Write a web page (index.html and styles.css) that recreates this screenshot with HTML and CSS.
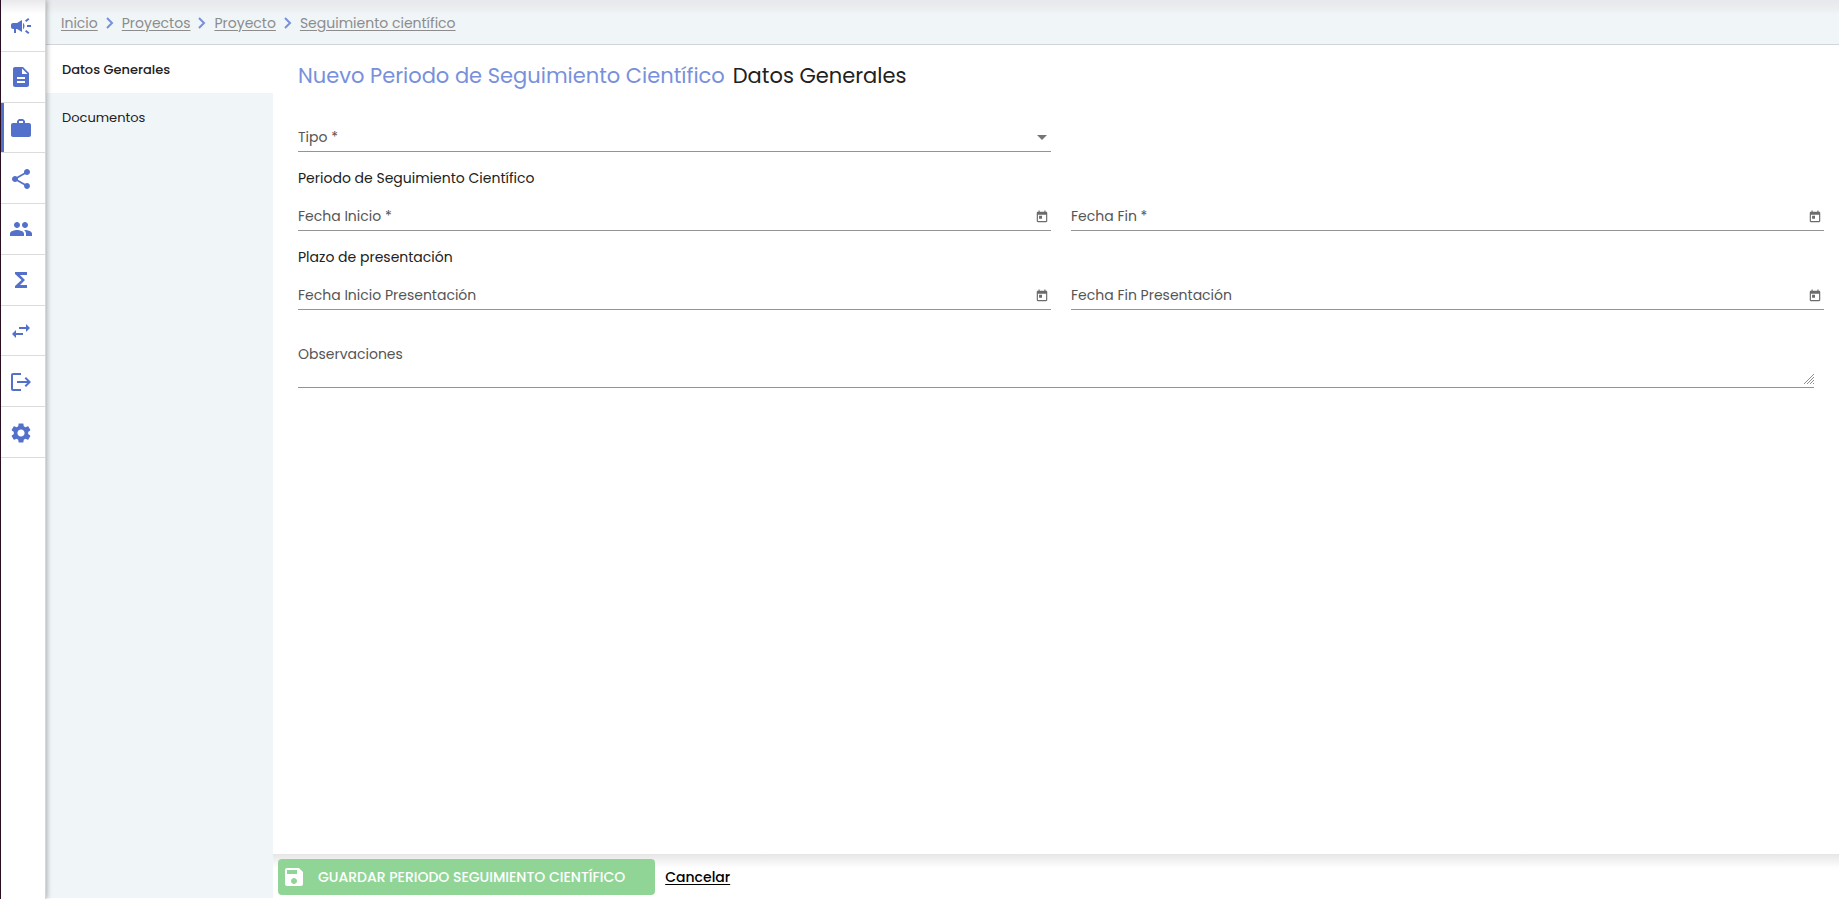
FILE: index.html
```html
<!DOCTYPE html>
<html lang="es">
<head>
<meta charset="utf-8">
<title>Nuevo Periodo de Seguimiento Científico</title>
<link rel="stylesheet" href="styles.css">
</head>
<body>
<div class="app">
  <nav class="rail" aria-label="Módulos">
    <ul class="rail-list">
      <li><a class="rail-link" href="#" aria-label="Convocatorias"><svg class="icon" viewBox="0 0 24 24"><path d="M18 11v2h4v-2h-4zm-2 6.610c.96.710 2.210 1.650 3.200 2.390.4-.53.8-1.070 1.200-1.600-.99-.74-2.240-1.680-3.200-2.400-.4.540-.8 1.080-1.200 1.610zM20.400 5.600c-.4-.53-.8-1.070-1.200-1.600-.99.740-2.240 1.680-3.200 2.400.4.530.8 1.070 1.200 1.600.96-.72 2.210-1.650 3.200-2.400zM4 9c-1.100 0-2 .9-2 2v2c0 1.100.9 2 2 2h1v4h2v-4h1l5 3V6L8 9H4zm11.500 3c0-1.330-.58-2.530-1.500-3.350v6.690c.92-.81 1.500-2.010 1.500-3.340z"/></svg></a></li>
      <li><a class="rail-link" href="#" aria-label="Solicitudes"><svg class="icon" viewBox="0 0 24 24"><path d="M14 2H6c-1.100 0-1.990.9-1.990 2L4 20c0 1.100.89 2 1.990 2H18c1.100 0 2-.9 2-2V8l-6-6zm2 16H8v-2h8v2zm0-4H8v-2h8v2zm-3-5V3.500L18.500 9H13z"/></svg></a></li>
      <li><a class="rail-link active" href="#" aria-label="Proyectos" aria-current="true"><svg class="icon" viewBox="0 0 24 24"><path d="M20 7h-4V5l-2-2h-4L8 5v2H4c-1.100 0-2 .9-2 2v10c0 1.100.9 2 2 2h16c1.100 0 2-.9 2-2V9c0-1.100-.9-2-2-2zm-6 0h-4V5h4v2z"/></svg></a></li>
      <li><a class="rail-link" href="#" aria-label="Compartir"><svg class="icon" viewBox="0 0 24 24"><path d="M18 16.080c-.76 0-1.440.3-1.960.77L8.910 12.700c.05-.23.090-.46.090-.7s-.04-.47-.09-.7l7.050-4.110c.54.5 1.250.81 2.040.81 1.660 0 3-1.340 3-3s-1.340-3-3-3-3 1.340-3 3c0 .24.040.47.090.7L8.040 9.810C7.500 9.310 6.790 9 6 9c-1.660 0-3 1.340-3 3s1.340 3 3 3c.79 0 1.500-.31 2.040-.81l7.120 4.160c-.05.210-.08.430-.08.650 0 1.610 1.310 2.920 2.920 2.920s2.920-1.310 2.920-2.920-1.310-2.920-2.920-2.920z"/></svg></a></li>
      <li><a class="rail-link" href="#" aria-label="Grupos"><svg class="icon" viewBox="0 0 24 24"><path d="M16 11c1.660 0 2.990-1.340 2.990-3S17.660 5 16 5s-3 1.340-3 3 1.340 3 3 3zm-8 0c1.660 0 2.990-1.340 2.990-3S9.660 5 8 5 5 6.340 5 8s1.340 3 3 3zm0 2c-2.330 0-7 1.170-7 3.500V19h14v-2.500c0-2.330-4.670-3.500-7-3.500zm8 0c-.29 0-.62.020-.97.050 1.160.84 1.970 1.970 1.970 3.450V19h6v-2.500c0-2.330-4.670-3.500-7-3.500z"/></svg></a></li>
      <li><a class="rail-link" href="#" aria-label="Totales"><svg class="icon" viewBox="0 0 24 24"><path d="M18 4H6v2l6.500 6L6 18v2h12v-3h-7l5-5-5-5h7z"/></svg></a></li>
      <li><a class="rail-link" href="#" aria-label="Intercambios"><svg class="icon" viewBox="0 0 24 24"><path d="M6.990 11L3 15l3.990 4v-3H14v-2H6.990v-3zM21 9l-3.990-4v3H10v2h7.010v3L21 9z"/></svg></a></li>
      <li><a class="rail-link" href="#" aria-label="Salidas"><svg class="icon" viewBox="0 0 24 24"><path d="M12 3H4a2 2 0 0 0-2 2v14a2 2 0 0 0 2 2h8v-2H4V5h8zM17 7l-1.400 1.400 2.600 2.600H8v2h10.200l-2.600 2.600L17 17l5-5z"/></svg></a></li>
      <li><a class="rail-link" href="#" aria-label="Configuración"><svg class="icon" viewBox="0 0 24 24"><path d="M19.140 12.940c.04-.3.060-.61.060-.94 0-.32-.02-.64-.07-.94l2.030-1.580c.18-.14.230-.41.120-.61l-1.920-3.320c-.12-.22-.37-.29-.59-.22l-2.390.96c-.5-.38-1.030-.7-1.620-.94l-.36-2.540c-.04-.24-.24-.41-.48-.41h-3.840c-.24 0-.43.170-.47.410l-.36 2.540c-.59.240-1.130.57-1.620.94l-2.390-.96c-.22-.08-.47 0-.59.220L2.740 8.870c-.12.210-.08.470.12.610l2.030 1.580c-.05.3-.09.630-.09.940s.02.640.07.940l-2.030 1.580c-.18.140-.23.410-.12.610l1.920 3.320c.12.220.37.290.59.220l2.390-.96c.5.380 1.030.7 1.620.94l.36 2.540c.05.240.24.410.48.410h3.840c.24 0 .44-.17.47-.41l.36-2.540c.59-.24 1.130-.56 1.620-.94l2.390.96c.22.080.47 0 .59-.22l1.920-3.320c.12-.22.070-.47-.12-.61l-2.010-1.580zM12 15.600c-1.980 0-3.600-1.620-3.600-3.600s1.620-3.600 3.600-3.600 3.600 1.620 3.600 3.600-1.620 3.600-3.600 3.600z"/></svg></a></li>
    </ul>
  </nav>

  <div class="workspace">
    <nav class="breadcrumb" aria-label="Ruta">
      <a href="#">Inicio</a>
      <svg class="chevron" viewBox="0 0 8 12"><path d="M1 1l5 5-5 5"/></svg>
      <a href="#">Proyectos</a>
      <svg class="chevron" viewBox="0 0 8 12"><path d="M1 1l5 5-5 5"/></svg>
      <a href="#">Proyecto</a>
      <svg class="chevron" viewBox="0 0 8 12"><path d="M1 1l5 5-5 5"/></svg>
      <a href="#">Seguimiento científico</a>
    </nav>

    <div class="body">
      <nav class="sections" aria-label="Secciones">
        <a class="section-link active" href="#" aria-current="page">Datos Generales</a>
        <a class="section-link" href="#">Documentos</a>
      </nav>

      <form class="panel">
        <main class="content">
          <h1 class="title"><span class="title-context">Nuevo Periodo de Seguimiento Científico</span><span>Datos Generales</span></h1>

          <div class="row">
            <div class="field">
              <label for="tipo">Tipo *</label>
              <select id="tipo" required><option value=""></option></select>
              <svg class="arrow" viewBox="0 0 10 5"><path d="M0 0h10L5 5z"/></svg>
            </div>
          </div>

          <h2 class="subtitle">Periodo de Seguimiento Científico</h2>
          <div class="row">
            <div class="field">
              <label for="inicio">Fecha Inicio *</label>
              <input id="inicio" type="text" required>
              <button class="picker" type="button" aria-label="Abrir calendario"><svg viewBox="0 0 24 24"><path d="M19 3h-1V1h-2v2H8V1H6v2H5c-1.110 0-1.990.9-1.990 2L3 19c0 1.100.89 2 2 2h14c1.100 0 2-.9 2-2V5c0-1.100-.9-2-2-2zm0 16H5V8h14v11zM7 10h5v5H7z"/></svg></button>
            </div>
            <div class="field">
              <label for="fin">Fecha Fin *</label>
              <input id="fin" type="text" required>
              <button class="picker" type="button" aria-label="Abrir calendario"><svg viewBox="0 0 24 24"><path d="M19 3h-1V1h-2v2H8V1H6v2H5c-1.110 0-1.990.9-1.990 2L3 19c0 1.100.89 2 2 2h14c1.100 0 2-.9 2-2V5c0-1.100-.9-2-2-2zm0 16H5V8h14v11zM7 10h5v5H7z"/></svg></button>
            </div>
          </div>

          <h2 class="subtitle">Plazo de presentación</h2>
          <div class="row">
            <div class="field">
              <label for="inicio-pres">Fecha Inicio Presentación</label>
              <input id="inicio-pres" type="text">
              <button class="picker" type="button" aria-label="Abrir calendario"><svg viewBox="0 0 24 24"><path d="M19 3h-1V1h-2v2H8V1H6v2H5c-1.110 0-1.990.9-1.990 2L3 19c0 1.100.89 2 2 2h14c1.100 0 2-.9 2-2V5c0-1.100-.9-2-2-2zm0 16H5V8h14v11zM7 10h5v5H7z"/></svg></button>
            </div>
            <div class="field">
              <label for="fin-pres">Fecha Fin Presentación</label>
              <input id="fin-pres" type="text">
              <button class="picker" type="button" aria-label="Abrir calendario"><svg viewBox="0 0 24 24"><path d="M19 3h-1V1h-2v2H8V1H6v2H5c-1.110 0-1.990.9-1.990 2L3 19c0 1.100.89 2 2 2h14c1.100 0 2-.9 2-2V5c0-1.100-.9-2-2-2zm0 16H5V8h14v11zM7 10h5v5H7z"/></svg></button>
            </div>
          </div>

          <div class="field notes">
            <label for="obs">Observaciones</label>
            <textarea id="obs"></textarea>
            <svg class="grip" viewBox="0 0 10 10"><path d="M0 10L10 0M3 10l7-7M6 10l4-4M9 10l1-1"/></svg>
          </div>
        </main>

        <footer class="actions">
          <button class="save" type="submit" disabled>
            <svg class="icon" viewBox="0 0 24 24"><path d="M17 3H5c-1.110 0-2 .9-2 2v14c0 1.100.89 2 2 2h14c1.100 0 2-.9 2-2V7l-4-4zm-5 16c-1.660 0-3-1.340-3-3s1.340-3 3-3 3 1.340 3 3-1.340 3-3 3zm3-10H5V5h10v4z"/></svg>
            <span>GUARDAR PERIODO SEGUIMIENTO CIENTÍFICO</span>
          </button>
          <a class="cancel" href="#">Cancelar</a>
        </footer>
      </form>
    </div>
  </div>
</div>
</body>
</html>
```

FILE: styles.css
```css
* { box-sizing: border-box; }

body {
  margin: 0;
  font-family: Poppins, Inter, "Noto Sans", sans-serif;
  font-size: 14px;
  color: #212121;
  background: #fff;
}

.app {
  display: flex;
  min-height: 100vh;
  border-left: 1px solid #2c1024;
}

.icon {
  display: block;
  width: 24px;
  height: 24px;
  fill: currentColor;
}

/* Icon rail */
.rail {
  flex: none;
  width: 45px;
  padding-top: 1px;
  border-right: 1px solid #d3d7db;
  background: linear-gradient(#e9e9ed, #fff 14px);
  box-shadow: 1px 0 5px rgba(0, 0, 0, 0.3);
  z-index: 1;
}

.rail-list {
  display: grid;
  grid-auto-rows: 1fr;
  height: 457px;
  margin: 0;
  padding: 0;
  list-style: none;
}

.rail-link {
  display: flex;
  align-items: center;
  height: 100%;
  padding: 1px 0 0 4px;
  border-bottom: 1px solid #dcdcdc;
  box-shadow: none;
  padding-left: 8px;
  color: #5371cb;
}

.rail-link.active { box-shadow: inset 3px 0 #5371cb; }

/* Breadcrumb */
.workspace {
  flex: 1;
  display: flex;
  flex-direction: column;
  min-width: 0;
}

.breadcrumb {
  display: flex;
  align-items: center;
  gap: 8px;
  height: 45px;
  padding: 2px 15px 0;
  border-bottom: 1px solid #d1d5d9;
  background: linear-gradient(#e7e8ed, #e9eaec 4px, #f0f5f8 15px);
}

.breadcrumb a {
  color: #8c8c8c;
  text-underline-offset: 2px;
}

.chevron {
  width: 8px;
  height: 12px;
  fill: none;
  stroke: #7890dc;
  stroke-width: 2;
}

/* Section list */
.body {
  flex: 1;
  display: flex;
}

.sections {
  flex: none;
  width: 227px;
  margin-bottom: 1px;
  background: #f0f5f8;
}

.section-link {
  display: flex;
  align-items: center;
  height: 48px;
  padding: 2px 0 0 16px;
  font-size: 13px;
  color: #212121;
  text-decoration: none;
}

.section-link.active {
  background: #fff;
  font-weight: 500;
}

/* Form */
.panel {
  flex: 1;
  display: flex;
  flex-direction: column;
  min-width: 0;
}

.content {
  flex: 1;
  padding: 16px 15px 0 25px;
}

.title {
  display: flex;
  gap: 8px;
  margin: 0 0 31px;
  font-size: 21px;
  line-height: 30px;
  font-weight: 400;
}

.title-context { color: #7890dc; }

.row {
  display: grid;
  grid-template-columns: 1fr 1fr;
  gap: 20px;
}

.field {
  display: grid;
  grid-template-columns: 1fr 18px;
  align-items: center;
  height: 30px;
  border-bottom: 1px solid #949494;
}

.field label {
  grid-area: 1 / 1;
  line-height: 30px;
  color: #555;
}

.field input,
.field select,
.field textarea {
  grid-area: 1 / 1 / 2 / 3;
  width: 100%;
  height: 100%;
  margin: 0;
  padding: 0;
  border: 0;
  outline: 0;
  background: transparent;
  font: inherit;
  appearance: none;
}

.arrow {
  grid-area: 1 / 2;
  justify-self: center;
  width: 10px;
  height: 5px;
  fill: #757575;
}

.picker {
  grid-area: 1 / 2;
  justify-self: center;
  width: 14px;
  height: 14px;
  margin-top: 2px;
  padding: 0;
  border: 0;
  background: transparent;
}

.picker svg {
  display: block;
  fill: #6b6b6b;
}

.subtitle {
  margin: 16px 0 12px;
  font-size: 14px;
  line-height: 21px;
  font-weight: 400;
}

.notes {
  grid-template-columns: 1fr 10px;
  align-items: start;
  height: 49px;
  margin: 29px 10px 0 0;
}

.field textarea { resize: none; }

.grip {
  grid-area: 1 / 2;
  align-self: end;
  width: 10px;
  height: 10px;
  margin-bottom: 3px;
  stroke: #8f8f8f;
}

/* Action bar */
.actions {
  display: flex;
  align-items: center;
  gap: 10px;
  height: 45px;
  padding: 1px 5px 0;
  background: linear-gradient(#e6e6e6, #fff 14px);
}

.save {
  display: flex;
  align-items: center;
  gap: 12px;
  height: 36px;
  padding: 0 30px 0 4px;
  border: 0;
  border-radius: 4px;
  background: #91d596;
  color: #fff;
  font: inherit;
  font-weight: 500;
}

.cancel {
  color: #000;
  font-weight: 500;
  text-underline-offset: 2px;
}
```
